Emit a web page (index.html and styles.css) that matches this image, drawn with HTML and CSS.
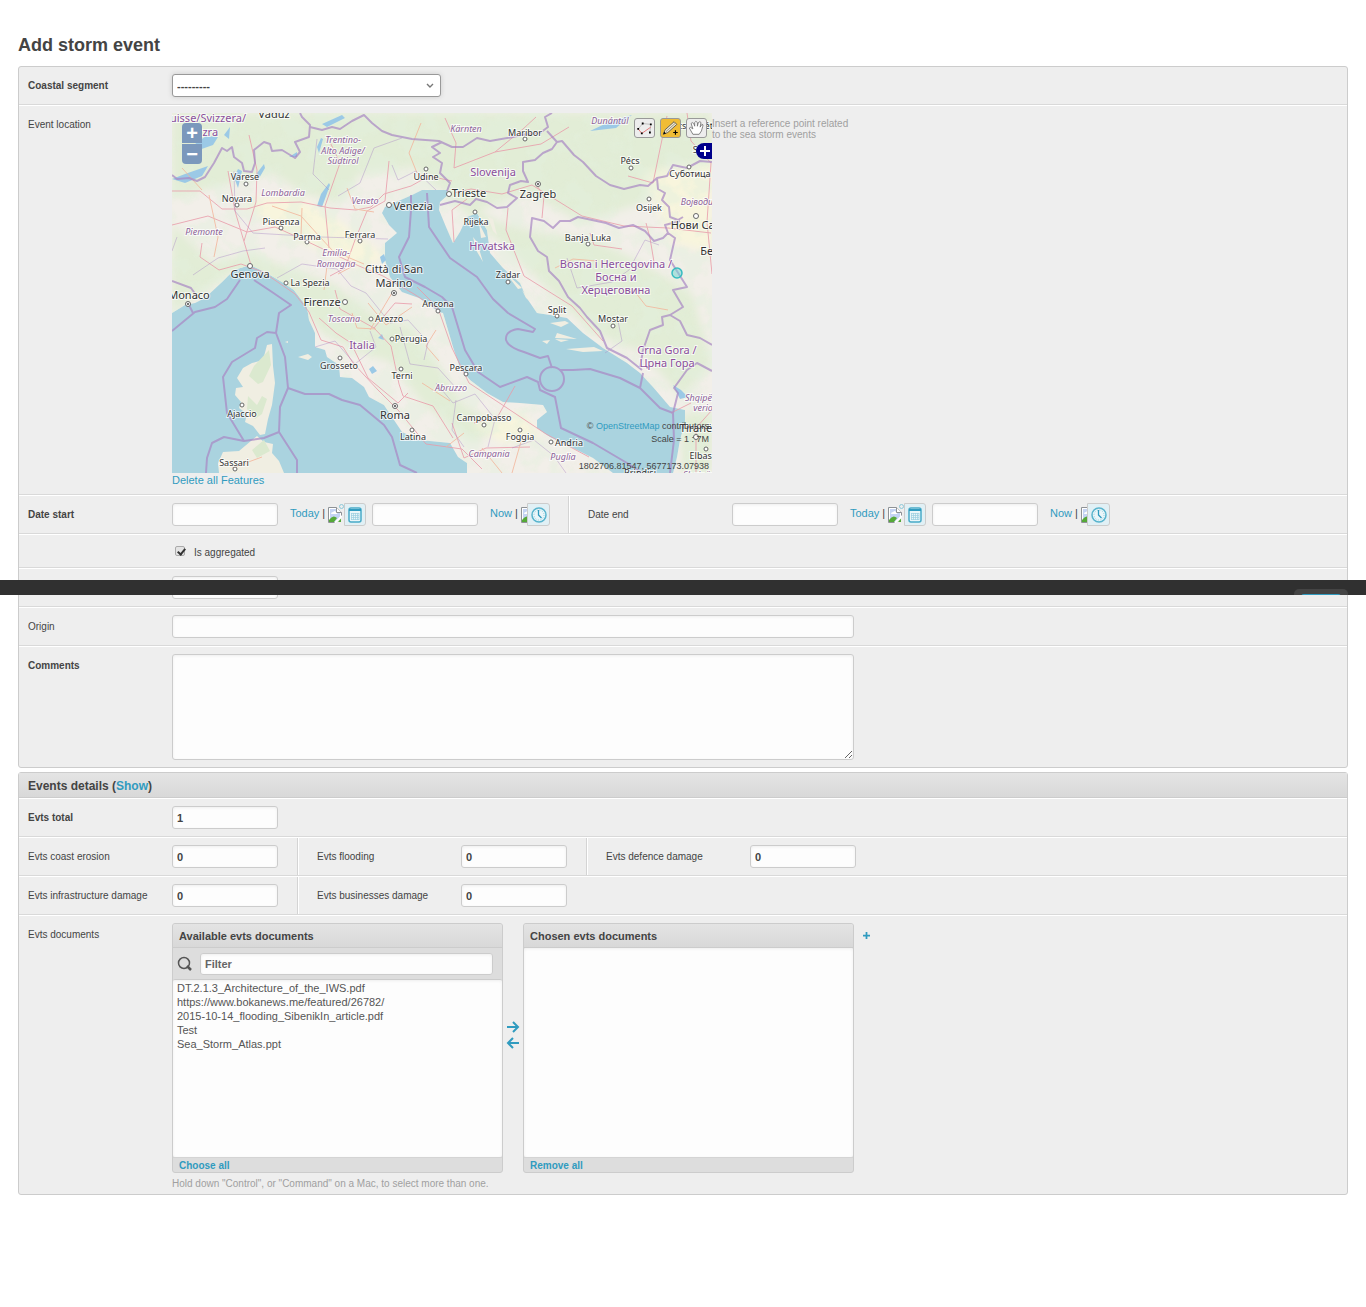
FILE: index.html
```
<!DOCTYPE html>
<html lang="en">
<head>
<meta charset="utf-8">
<title>Add storm event</title>
<link rel="stylesheet" href="styles.css">
</head>
<body>
<svg class="sprite" aria-hidden="true">
  <symbol id="broken" viewBox="0 0 14 16">
    <path d="M.5.5h8l5 5v5l-5 5h-8z" fill="#fff" stroke="#8e9296"/>
    <path d="M2 2h6v4h4v4l-5 5H2z" fill="#c5d4f4"/>
    <path d="M3 7q0-2 2-2 2-2 3 0 2 0 1 2z" fill="#fff"/>
    <path d="M1 15v-2q4-6 8-2l-3 4zM10 15l3-4v4z" fill="#55a938"/>
    <path d="M14 9 7 16" stroke="#fff" stroke-width="2"/>
    <path d="M8.500.5v5h5" fill="#fff" stroke="#8e9296"/>
  </symbol>
  <symbol id="calendar" viewBox="0 0 14 16">
    <rect x="1" y="1" width="12" height="14" rx="2" fill="#eaf6f9" stroke="#48aac7" stroke-width="1.500"/>
    <path d="M1 2h12v2H1z" fill="#309bbf"/>
    <path d="M3.500 6v7M5.500 6v7M7.500 6v7M9.500 6v7M11 6v7M3 6.500h8M3 8.500h8M3 10.500h8M3 12.500h8" stroke="#9bcfdf" stroke-width=".7"/>
  </symbol>
  <symbol id="clock" viewBox="0 0 16 16">
    <circle cx="8" cy="8" r="7" fill="#eaf6f9" stroke="#58b4cd" stroke-width="1.500"/>
    <circle cx="8" cy="8" r="5" fill="none" stroke="#8ccbdc" stroke-dasharray="1 1.600"/>
    <path d="M7.500 3v5l3 3" fill="none" stroke="#309bbf" stroke-width="1.300"/>
  </symbol>
</svg>

<main class="page">
<h1>Add storm event</h1>
<form>
<section class="module">
  <div class="row">
    <div class="cell">
      <label class="req" for="segment">Coastal segment</label>
      <div class="select-wrap">
        <select id="segment"><option>---------</option></select>
        <svg class="chevron" viewBox="0 0 8 6" aria-hidden="true"><path d="m1 1 3 3 3-3" fill="none" stroke="#777" stroke-width="1.400"/></svg>
      </div>
    </div>
  </div>

  <div class="row">
    <div class="cell location">
      <span class="label">Event location</span>
      <div>
        <div class="map">
          <svg class="map-art" viewBox="0 0 540 360" role="img" aria-label="Map of the Adriatic">
            <defs>
              <clipPath id="land"><path d="M0 0H540V360H501L505 344 508 327 513 310V297L498 294 481 274 468 260 455 250 431 235 411 220 395 205 378 202 365 200 354 184 348 170 331 155 318 140 315 117 305 100 295 104 288 119 281 130 274 114 267 97 268 89 276 82 275 77 250 77 240 82 213 94 210 100 217 112 225 120 213 130V147L218 164 230 179 247 185 267 199 271 200 281 234 288 255 298 267 315 280 331 289 348 290 371 292 375 299 365 307V315L378 324 405 337 421 345 441 360H295V350L286 344 278 330 268 329 247 327 230 319 220 304 212 292 197 284 192 274 180 265 168 264 167 252 155 244 153 237 143 234V220L137 207 135 194 128 185 122 177 110 169 93 159 78 152 62 157 50 169 33 185 23 190 13 192 0 200z"/></clipPath>
              <filter id="soft" x="-30%" y="-30%" width="160%" height="160%"><feGaussianBlur stdDeviation="4"/></filter>
              <filter id="woods" x="0" y="0" width="100%" height="100%"><feTurbulence type="fractalNoise" baseFrequency=".045" numOctaves="4" seed="7"/><feColorMatrix values="0 0 0 0 .77  0 0 0 0 .87  0 0 0 0 .72  0 5 0 0 -2.200"/></filter>
            </defs>
            <rect width="540" height="360" fill="#aad3df"/>
            <g clip-path="url(#land)">
              <rect width="540" height="360" fill="#f2efe9"/>
              <g fill="#e2edd6" filter="url(#soft)">
                <path d="M0 0H540V60L500 50 470 90 410 110 355 80 300 100 240 55 190 60 165 90 130 80 100 60 60 70 0 85zM0 110 20 130 40 150 80 140 115 155 160 170 200 200 240 215 265 250 290 290 330 315 300 330 250 290 220 250 190 240 150 220 120 185 60 160 0 200zM270 80 330 110 370 120 420 125 470 150 520 180 540 250 510 285 470 240 420 220 380 180 340 140zM510 300h30v60h-30z"/>
              </g>
              <g fill="#f8f5dd" filter="url(#soft)"><path d="M120 80 170 110 215 145 190 155 110 120 70 90zM300 310 350 300 370 325 330 330zM470 60 540 50V140L500 130z"/></g>
              <rect width="540" height="360" filter="url(#woods)" opacity=".45"/>
            </g>
            <g fill="#f0eee2">
              <path d="m95 232 5-1 1 22 2 17-3 22-4 14-3 15-5 1-7-9-8-4 2-8-8-6 2-6-6-7 1-7 7-1-6-9 6-10 9-5 11-3z"/>
              <path d="m47 360-1-10 5-11 16-1 18-15 7 6 9 2-1 9 7 8 5 12z"/>
              <path d="m126 244 10-3 4 3-4 3zM113 229l3-1v2zM316 104l5 2 4 16-4-4zM307 110l7 14-5 1zM301 124l4 5 6 20-7-12zM318 133l10 11-8-6zM324 144l18 17-2 2zM333 159l17 16-4 1zM350 177l9 12-5-4zM378 210l15-2 4 2-8 4zM385 220l20 6-22-1zM370 228l8-1-3 4zM394 236l28-2 9 4-20 1zM383 226l14 1-8 2z"/>
            </g>
            <g fill="#dbe9cf"><path d="m97 237 2 15-8 17-5 2-9-8 5-10zM76 283l9 9 5-9 5 3-5 15-7 5-8-10zM80 337l12-10 6 11-13 7z"/></g>
            <g fill="#9bc9e6">
              <path d="m157 70 1 2-8 22-5-1 4-12zM19 34l15-11 12 1-5 8-17 6zM0 66l13-5 23-8-6 10-17 7zM52 22l6-8-1 12zM145 34l4-9 2 1-4 14zM85 60l7-9 1 4-7 12zM62 64l4-8 4 2-4 17zM117 44l8-5v5zM418 18l19-9 23-7-16 13zM150 11l20-9 3 3-18 9zM206 225l4-4 2 6zM197 256l4-3 4 5-5 3zM208 144l4-3 2 6-4 4zM501 272l8 5 7 7-8 2z"/>
            </g>
            <g class="roads">
              <path d="M0 78h28l22 18h25l20-6 34-1 29 6 26 2 15-3 13-13 27-8 18-10 23 5M0 112l36-9 39 16 28-5 29 13 55 26 24 10 31 18 26 17M56 58l7 40 10 34 6 20M77 22l8 35-1 32-12 39M158 163l15-8 10-28 12-29 18-10 4-40M156 25l12 25-15 43 4 42M30 130l-2 14 19 13 22-6 22 8 32 22 14 18 12 28 22 7 10 16 25 27 20 20 28 34 36 5 20 20M147 205l17 15 15 10 17 35 30 25 10-10M202 215l17 18 8 38 4 12 30 10 20 32M163 177l5 19 34 19 21-25 17 1M245 174l21 21 14 40 17 35 32 21 45 30 43 23"/>
              <path d="M282 80l17-4 31 5 30-9 50 31 42 10 44 2 43 5M295 86l-15 11 2 32M336 95l-2 22 18 46 48 30 31 35M273 5l11 25-2 25 41-16 28-23 13-12M323 39l46-8 28-17M363 70l9 13-2 22M456 63l25 7 7-34 7-33M515 0l4 28 20 22-4 59 5 52M474 110l4 15 4 24-16 3M418 120l4 12 28 4M302 310l24-7 17-30M280 310l12 35 22-10 44-1M524 360V315l16-18M499 300l20-10"/>
              <path class="minor" d="M10 55l20 22M100 93l29 10 18 20 14 15 31 13M130 95l-1 27M37 82l9 42-4 20M175 75l8 21 19 3M155 153l-3 24M183 152l-17 9M196 190l18 22 26-18M220 180l-22 37M264 217l-10 16 13 15M250 270l28 18M274 334l18-14M383 155l18-9 24 2M460 175l14 18 22 4M310 335l20 25M350 325l-10 35M180 200l5 15 19 1M60 355l30-11M245 60l-8-20 12-30"/>
            </g>
            <g class="borders">
              <path d="M0 62 5 66 17 65 25 68 33 64 42 50 50 35 55 38 60 34 62 44 70 50 72 58 80 59 83 50 82 37 92 29 98 31 100 38 110 37 123 45 128 39 123 29 137 24 138 12 130 4 128 0M138 14 150 17 160 14 168 16 180 8 192 2 200 10 210 18 220 22 240 26 267 28 280 34 291 34 305 25 318 28 341 24 355 21 368 20 376 14 373 4 380 0"/>
              <path d="M270 29 260 34 268 40 261 44 270 50 268 60 278 70 275 78M268 92 283 88 298 92 304 86 315 89 325 95 335 94 345 85 336 80 338 72 349 68 356 69 351 58 351 49 363 47 371 40 380 36 385 29 375 18M385 29 390 28 402 42 411 49 424 63 438 72 452 76 468 72 476 73 485 65 495 63 501 52 515 55 528 48 540 49M485 65 486 76 493 80 490 87 497 94 498 104 506 107 511 104M508 108 493 112 496 120 491 125 482 128 473 118 461 112 447 115 434 110 406 104 398 108 388 108 381 115 372 108 360 105 358 124 366 138 375 144 377 158 387 168 396 184 408 195 415 204 428 218 435 235 455 245 470 257M496 120 503 125 498 147 515 174 501 177 511 194 498 202 490 204 491 212 478 217 471 237 468 255M498 202 508 208 515 222 528 225 540 232M501 300 506 280 502 275 515 257 525 250 540 258"/>
              <path d="M0 218 23 199 43 194 55 186 68 167M17 192l4 8M82 167 100 179 119 192 107 200 104 220 113 244 116 275 108 294 107 319 92 325 72 328 55 300 51 264 60 249 83 235 85 225 95 219 104 220M116 275 133 281H157L170 287 188 292 212 312 220 324 228 352 245 360M107 319 125 347V360M72 328 52 324 40 330 35 345 34 360M0 168l19 7 7 10M239 82V97L237 124 227 144 233 164 253 174 270 184 280 194 293 237 306 259 328 274 355 264 366 269 368 277 383 284 389 315 421 330 455 350 470 360M255 80 257 114 278 145 305 164 321 186 336 200 363 216 361 219 346 216Q333 218 334 227 336 234 352 239L368 245 376 243 380 255"/>
              <circle cx="380" cy="266" r="12"/><path d="M388 257H401L418 256 448 265 468 275 488 295 501 300 502 327 498 360M468 275 471 260"/>
              <path class="minor" d="M0 138l5-14M62 58l1 40 18 22 34 2 34 2 67 2M21 162l25-17 25-7 22-3M105 165l25-14 35 5 14 17 15 7 24 30 18-3 20 22-4 18M143 234l20-6 20 23 21-17-6-16M228 214l10 37 28 4 18 20M166 83l22-13 14-35 28-10M145 26l-4 35 16 16M220 52l6 15 18-9 20 19M264 270l17 20 22-9 20 25-7 28M284 287l-4 30 12 17M395 145l10 30 35-6 17-12 16-30 14 5M445 203l5 25-17 12M340 335l22-8 20 16 12 17"/>
            </g>
            <g class="towns">
              <circle cx="74" cy="71" r="2"/><circle cx="65" cy="92" r="2"/><circle cx="109" cy="115" r="2"/><circle cx="135" cy="129" r="2"/><circle cx="188" cy="128" r="2"/><circle cx="254" cy="56" r="2"/><circle cx="217" cy="92" r="2.500"/><circle cx="78" cy="153" r="2.500"/><circle cx="114" cy="170" r="2"/><circle cx="222" cy="180" r="2.500"/><circle cx="16" cy="191" r="2.500"/><circle cx="173" cy="189" r="2.500"/><circle cx="199" cy="206" r="2"/><circle cx="220" cy="226" r="2"/><circle cx="168" cy="245" r="2"/><circle cx="229" cy="256" r="2"/><circle cx="266" cy="198" r="2"/><circle cx="70" cy="292" r="2"/><circle cx="223" cy="293" r="2.500"/><circle cx="240" cy="317" r="2"/><circle cx="63" cy="356" r="2"/><circle cx="294" cy="261" r="2"/><circle cx="312" cy="312" r="2"/><circle cx="348" cy="317" r="2"/><circle cx="379" cy="329" r="2"/><circle cx="277" cy="81" r="2.500"/><circle cx="366" cy="71" r="2.500"/><circle cx="353" cy="26" r="2"/><circle cx="303" cy="99" r="2"/><circle cx="459" cy="55" r="2"/><circle cx="517" cy="54" r="2"/><circle cx="477" cy="86" r="2"/><circle cx="524" cy="103" r="2.500"/><circle cx="416" cy="131" r="2"/><circle cx="336" cy="169" r="2"/><circle cx="385" cy="203" r="2"/><circle cx="441" cy="213" r="2"/><circle cx="524" cy="324" r="2.500"/><circle cx="534" cy="336" r="2"/>
              <g fill="#444" stroke="none"><circle cx="16" cy="191" r="1"/><circle cx="222" cy="180" r="1"/><circle cx="223" cy="293" r="1"/><circle cx="366" cy="71" r="1"/></g>
            </g>
            <g class="places">
              <text x="102" y="5" class="big">Vaduz</text><text x="73" y="67">Varese</text><text x="65" y="89">Novara</text><text x="109" y="112">Piacenza</text><text x="135" y="127">Parma</text><text x="188" y="125">Ferrara</text><text x="254" y="67">Udine</text><text x="241" y="97" class="big">Venezia</text><text x="78" y="165" class="big">Genova</text><text x="138" y="173">La Spezia</text><text x="222" y="160" class="big">Città di San</text><text x="222" y="174" class="big">Marino</text><text x="17" y="186" class="big">Monaco</text><text x="150" y="193" class="big">Firenze</text><text x="217" y="209">Arezzo</text><text x="239" y="229">Perugia</text><text x="167" y="256">Grosseto</text><text x="230" y="266">Terni</text><text x="266" y="194">Ancona</text><text x="70" y="304">Ajaccio</text><text x="223" y="306" class="big">Roma</text><text x="241" y="327">Latina</text><text x="62" y="353">Sassari</text><text x="294" y="258">Pescara</text><text x="312" y="308">Campobasso</text><text x="348" y="327">Foggia</text><text x="397" y="333">Andria</text><text x="468" y="363">Brindisi</text>
              <text x="297" y="84" class="big">Trieste</text><text x="366" y="85" class="big">Zagreb</text><text x="353" y="23">Maribor</text><text x="304" y="112">Rijeka</text><text x="458" y="51">Pécs</text><text x="518" y="64">Суботица</text><text x="477" y="98">Osijek</text><text x="524" y="116" class="big">Нови Сад</text><text x="416" y="128">Banja Luka</text><text x="538" y="142" class="big">Бео</text><text x="336" y="165">Zadar</text><text x="385" y="200">Split</text><text x="441" y="209">Mostar</text><text x="524" y="319" class="big">Tiranë</text><text x="534" y="346">Elbasan</text><text x="518" y="16">Kecskemét</text><text x="536" y="40">Szeged</text>
            </g>
            <g class="regions">
              <text x="171" y="30">Trentino-</text><text x="171" y="41">Alto Adige/</text><text x="171" y="51">Südtirol</text><text x="111" y="83">Lombardia</text><text x="193" y="91">Veneto</text><text x="32" y="122">Piemonte</text><text x="164" y="143">Emilia-</text><text x="164" y="154">Romagna</text><text x="172" y="209">Toscana</text><text x="279" y="278">Abruzzo</text><text x="317" y="344">Campania</text><text x="391" y="347">Puglia</text><text x="294" y="19">Kärnten</text><text x="438" y="11">Dunántúl</text><text x="530" y="92">Војводина</text><text x="532" y="288">Shqipëria</text><text x="535" y="298">veriore</text><text x="530" y="365">Shqipëria</text>
            </g>
            <g class="countries">
              <text x="36" y="9">uisse/Svizzera/</text><text x="31" y="23">Svizra</text><text x="190" y="236">Italia</text><text x="321" y="63">Slovenija</text><text x="320" y="137">Hrvatska</text><text x="444" y="155">Bosna i Hercegovina /</text><text x="444" y="168">Босна и</text><text x="444" y="181">Херцеговина</text><text x="495" y="241">Crna Gora /</text><text x="495" y="254">Црна Гора</text>
            </g>
            <circle cx="505" cy="160" r="5" fill="#6fd3d3" fill-opacity=".5" stroke="#36bcc0" stroke-width="1.500"/>
          </svg>
          <div class="zoom">
            <button type="button" aria-label="Zoom in">+</button>
            <button type="button" aria-label="Zoom out">−</button>
          </div>
          <div class="tools">
            <button type="button" aria-label="Modify"><svg viewBox="0 0 20 20"><path d="m3 11 5-6 9 1-1 9" fill="none" stroke="#bbb"/><path d="m3 11 4 5 10-7" fill="none" stroke="#e46d6d"/><path d="M2 10h2v2H2zM7 4h2v2H7zM16 5h2v2h-2zM15 14h2v2h-2zM6 15h2v2H6z"/></svg></button>
            <button type="button" class="active" aria-label="Draw"><svg viewBox="0 0 20 20"><path d="m2 17 2-5 10-9 3 3L7 15z" fill="#f3e9c8" stroke="#555"/><path d="m5 14 10-9" stroke="#888"/><path d="m2 17 1-3 2 2z"/><path d="M13 15h5m-2.500-2.500v5" stroke="#000" stroke-width="1.300"/></svg></button>
            <button type="button" aria-label="Pan"><svg viewBox="0 0 20 20"><path d="M6 17 2 10q1-2 4 1L4 5q1-2 3 0l1 3V4q1-3 3 0v4l1-4q2-2 3 0l-1 5 2-3q2 0 1 2-1 6-4 9z" fill="#fff" stroke="#777"/></svg></button>
          </div>
          <button type="button" class="layers" aria-label="Layers"><svg viewBox="0 0 16 16"><path d="M9 3v10M4 8h10" stroke="#fff" stroke-width="2"/></svg></button>
          <div class="attribution">© <a href="#osm">OpenStreetMap</a> contributors</div>
          <div class="scale">Scale = 1 : 7M</div>
          <div class="position">1802706.81547, 5677173.07938</div>
        </div>
        <a class="delete" href="#delete">Delete all Features</a>
      </div>
      <p class="hint">Insert a reference point related to the sea storm events</p>
    </div>
  </div>

  <div class="row">
    <div class="cell wide">
      <label class="req" for="start-date">Date start</label>
      <div class="datetime">
        <input id="start-date" type="text">
        <span class="shortcuts date"><a href="#today">Today</a> | <svg class="broken"><use href="#broken"/></svg><i class="ring"></i></span>
        <button type="button" class="picker" aria-label="Calendar"><svg width="14" height="16"><use href="#calendar"/></svg></button>
        <input type="text" class="time" aria-label="Start time">
        <span class="shortcuts now"><a href="#now">Now</a> | <svg class="broken"><use href="#broken"/></svg></span>
        <button type="button" class="picker" aria-label="Clock"><svg width="16" height="16"><use href="#clock"/></svg></button>
      </div>
    </div>
    <div class="cell wide">
      <label for="end-date">Date end</label>
      <div class="datetime">
        <input id="end-date" type="text">
        <span class="shortcuts date"><a href="#today">Today</a> | <svg class="broken"><use href="#broken"/></svg><i class="ring"></i></span>
        <button type="button" class="picker" aria-label="Calendar"><svg width="14" height="16"><use href="#calendar"/></svg></button>
        <input type="text" class="time" aria-label="End time">
        <span class="shortcuts now"><a href="#now">Now</a> | <svg class="broken"><use href="#broken"/></svg></span>
        <button type="button" class="picker" aria-label="Clock"><svg width="16" height="16"><use href="#clock"/></svg></button>
      </div>
    </div>
  </div>

  <div class="row">
    <div class="cell check">
      <input id="aggregated" type="checkbox" checked>
      <label for="aggregated">Is aggregated</label>
    </div>
  </div>
  <div class="row"><div class="cell"><span class="label"></span><input type="text" aria-label="Value"></div></div>
  <div class="row"><div class="cell"><label for="origin">Origin</label><input id="origin" class="long" type="text"></div></div>
  <div class="row"><div class="cell"><label class="req" for="comments">Comments</label><textarea id="comments" class="long"></textarea></div></div>
</section>

<section class="module">
  <h2>Events details (<a href="#show">Show</a>)</h2>
  <div class="row"><div class="cell"><label class="req" for="total">Evts total</label><input id="total" type="text" value="1"></div></div>
  <div class="row">
    <div class="cell third"><label for="erosion">Evts coast erosion</label><input id="erosion" type="text" value="0"></div>
    <div class="cell third"><label for="flooding">Evts flooding</label><input id="flooding" type="text" value="0"></div>
    <div class="cell third"><label for="defence">Evts defence damage</label><input id="defence" type="text" value="0"></div>
  </div>
  <div class="row">
    <div class="cell third"><label for="infra">Evts infrastructure damage</label><input id="infra" type="text" value="0"></div>
    <div class="cell third"><label for="business">Evts businesses damage</label><input id="business" type="text" value="0"></div>
  </div>
  <div class="row">
    <div class="cell docs">
      <label for="available">Evts documents</label>
      <div>
        <div class="selector">
          <div class="panel">
            <h3>Available evts documents</h3>
            <div class="filter">
              <svg viewBox="0 0 16 16" aria-hidden="true"><circle cx="7" cy="7" r="5.500" fill="none" stroke="#555" stroke-width="1.500"/><path d="m10 10 4 4" stroke="#555" stroke-width="2.500"/></svg>
              <input type="text" placeholder="Filter" aria-label="Filter">
            </div>
            <select id="available" multiple>
              <option>DT.2.1.3_Architecture_of_the_IWS.pdf</option>
              <option>https://www.bokanews.me/featured/26782/</option>
              <option>2015-10-14_flooding_SibenikIn_article.pdf</option>
              <option>Test</option>
              <option>Sea_Storm_Atlas.ppt</option>
            </select>
            <a class="all" href="#choose">Choose all</a>
          </div>
          <div class="arrows">
            <button type="button" aria-label="Choose"><svg viewBox="0 0 14 12"><path d="M1 6h11M7 1l5 5-5 5" /></svg></button>
            <button type="button" aria-label="Remove"><svg viewBox="0 0 14 12"><path d="M13 6H2M7 1 2 6l5 5" /></svg></button>
          </div>
          <div class="panel">
            <h3>Chosen evts documents</h3>
            <select multiple aria-label="Chosen evts documents"></select>
            <a class="all" href="#remove">Remove all</a>
          </div>
          <a class="add" href="#add" aria-label="Add document"><svg viewBox="0 0 8 8"><path d="M4 0v8M0 4h8" /></svg></a>
        </div>
        <p class="help">Hold down "Control", or "Command" on a Mac, to select more than one.</p>
      </div>
    </div>
  </div>
</section>
</form>
</main>
<footer class="submit-bar"><div class="submit-box"><button type="submit" aria-label="Save"></button></div></footer>
</body>
</html>
```
FILE: styles.css
```
* { box-sizing: border-box; }
body { margin: 0; position: relative; background: #fff; color: #444; font: 11px/14px "Liberation Sans", Arial, sans-serif; }
a { color: #309bbf; text-decoration: none; }
button, input, select, textarea { font: inherit; color: inherit; margin: 0; }
.sprite { display: none; }
.page { padding: 33px 18px 112px; }
h1 { margin: 0 0 9px; font-size: 18px; line-height: 24px; }
.module { margin-bottom: 4px; border: 1px solid #ccc; border-radius: 3px; background: #eee; }
h2 { margin: 0; padding: 0 9px; height: 25px; border-bottom: 1px solid #ccc; background: linear-gradient(#e4e4e4, #d8d8d8); font-size: 12px; line-height: 26px; }

/* Form rows */
.row { display: flex; padding: 0 9px; border-top: 1px solid #fff; border-bottom: 1px solid #d9d9d9; }
.row:first-child { border-top: 0; }
.row:last-child { border-bottom: 0; }
.cell { display: flex; align-items: flex-start; padding: 7px 0; }
.cell > label, .cell > .label { flex: none; width: 144px; padding-top: 5px; font-size: 10px; line-height: 13px; white-space: nowrap; }
.cell > .req { font-weight: bold; }
.cell.third, .cell.wide { margin-right: 19px; border-right: 1px solid #d4d4d4; box-shadow: 1px 0 #fff; }
.third { width: 270px; }
.wide { width: 541px; }
.cell.third:last-child, .cell.wide:last-child { border: 0; box-shadow: none; }
input[type="text"], textarea { width: 106px; height: 23px; padding: 0 4px; border: 1px solid #ccc; border-radius: 3px; background: #fdfdfd; box-shadow: inset 0 1px 3px #eee; font-weight: bold; outline: 0; }
input.long, textarea.long { width: 682px; }
textarea { height: 106px; }
.select-wrap { position: relative; width: 269px; }
.select-wrap select { display: block; width: 100%; height: 23px; padding: 0 4px; border: 1px solid #999; border-radius: 3px; background: #fff; box-shadow: 0 0 5px #ccc; font-weight: bold; appearance: none; }
.chevron { position: absolute; right: 7px; top: 9px; width: 8px; height: 6px; }
.hint { width: 140px; margin: 0; padding-top: 5px; color: #a0a0a0; font-size: 10px; line-height: 11px; }

/* Map */
.location { padding-bottom: 7px; }
.map { position: relative; width: 540px; height: 360px; overflow: hidden; }
.map-art { display: block; width: 540px; height: 360px; font-family: "Noto Sans", sans-serif; text-anchor: middle; }
.roads { fill: none; stroke: #e99aa9; stroke-width: 1; stroke-linejoin: round; opacity: .8; }
.roads .minor { stroke: #f3b49a; }
.borders { fill: none; stroke: #a987c4; stroke-width: 2; stroke-linejoin: round; opacity: .7; }
.borders .minor { stroke-width: 1; opacity: .6; }
.towns { fill: #fff; stroke: #666; stroke-width: 1; }
.places, .regions, .countries { paint-order: stroke; stroke: #fff; stroke-opacity: .7; stroke-width: 2px; }
.places { fill: #333; font-size: 9px; }
.places .big { font-size: 11px; }
.regions { fill: #8d6399; font-size: 9px; font-style: italic; }
.countries { fill: #8a4f9b; font-size: 11px; }
.zoom { position: absolute; left: 10px; top: 10px; display: grid; gap: 1px; }
.zoom button { width: 20px; height: 20px; padding: 0; border: 0; border-radius: 4px 4px 0 0; background: #7b98bc; color: #fff; font-size: 20px; font-weight: bold; line-height: 18px; }
.zoom button + button { border-radius: 0 0 4px 4px; }
.tools { position: absolute; left: 462px; top: 5px; display: flex; gap: 5px; }
.tools button { width: 21px; height: 20px; padding: 0; border: 1px solid #999; border-radius: 3px; background: #ededed; }
.tools .active { background: #f0bc35; }
.tools svg { display: block; width: 19px; height: 18px; }
.layers { position: absolute; right: 0; top: 30px; width: 16px; height: 16px; padding: 0; border: 0; border-radius: 8px 0 0 8px; background: #00008b; }
.layers svg { display: block; }
.attribution, .scale, .position { position: absolute; right: 3px; font-size: 9px; line-height: 12px; }
.attribution { bottom: 41px; }
.scale { bottom: 28px; }
.position { bottom: 1px; }
.delete { display: block; }

/* Date and time fields */
.datetime { display: flex; }
.shortcuts { display: flex; gap: 3px; padding: 3px 0 0 12px; position: relative; }
.date { width: 66px; }
.now { width: 49px; overflow: hidden; }
.broken { flex: none; width: 14px; height: 16px; margin-top: 1px; }
.ring { position: absolute; right: 0; top: 1px; width: 5px; height: 5px; border: 1px solid #8bc9da; border-radius: 5px; }
.picker { display: grid; place-items: center; width: 22px; height: 23px; padding: 0; border: 1px solid #ccc; border-radius: 0 3px 3px 0; background: #e1f0f5; }
.time { margin-left: 6px; }
.now + .picker { width: 23px; }
.check { padding: 10px 0 8px 147px; gap: 9px; }
.cell.check label { width: auto; padding-top: 1px; }
.check input { appearance: none; width: 10px; height: 10px; margin-top: 1px; border: 1px solid #aaa; border-radius: 2px; background: #e4e4e4; }
.check input:checked::after { content: ""; display: block; width: 3px; height: 6px; margin-left: 3px; border: solid #333; border-width: 0 2px 2px 0; transform: rotate(40deg); }

/* Two-panel document selector */
.selector { display: flex; }
.panel { display: flex; flex-direction: column; width: 331px; height: 250px; border: 1px solid #ccc; border-radius: 3px; background: #ddd; overflow: hidden; }
h3 { flex: none; height: 24px; margin: 0; padding: 0 6px; border-bottom: 1px solid #ccc; background: linear-gradient(#e4e4e4, #d8d8d8); font-size: 11px; line-height: 24px; }
.filter { display: flex; flex: none; align-items: center; gap: 7px; height: 31px; padding: 0 9px 0 4px; }
.filter svg { width: 16px; height: 16px; }
.filter input[type="text"] { flex: 1; height: 22px; }
.filter ::placeholder { color: #666; opacity: 1; }
.panel select { flex: 1; width: 100%; min-height: 0; padding: 2px 0 0 2px; border: 0; border-top: 1px solid #ccc; background: #fdfdfd; outline: 0; box-shadow: inset 0 1px 3px #eee; overflow: hidden; }
.panel h3 + select { border-top: 0; }
.panel option { height: 14px; min-height: 0; padding: 0 2px; line-height: 14px; color: #555; }
.all { flex: none; height: 15px; padding: 1px 6px; border-top: 1px solid #d4d4d4; font-size: 10px; line-height: 14px; font-weight: bold; }
.arrows { width: 20px; padding-top: 98px; display: grid; align-content: start; justify-items: center; gap: 4px; }
.arrows button { width: 14px; height: 12px; padding: 0; border: 0; background: none; }
.arrows svg, .add svg { display: block; fill: none; stroke: #309bbf; stroke-width: 2; }
.add { padding: 9px; }
.add svg { width: 7px; height: 7px; }
.help { margin: 0; padding-top: 5px; color: #a0a0a0; font-size: 10px; line-height: 12px; }
.docs { padding-bottom: 4px; }

/* Submit bar laid over the form */
.submit-bar { position: absolute; top: 580px; left: 0; right: 0; height: 15px; padding: 9px 18px 0; display: flex; justify-content: flex-end; overflow: hidden; background: #303030; }
.submit-box { width: 54px; height: 30px; padding: 5px 7px; border-radius: 5px; background: #444; }
.submit-box button { display: block; width: 100%; height: 20px; border: 0; border-radius: 3px; background: #309bbf; }
```
